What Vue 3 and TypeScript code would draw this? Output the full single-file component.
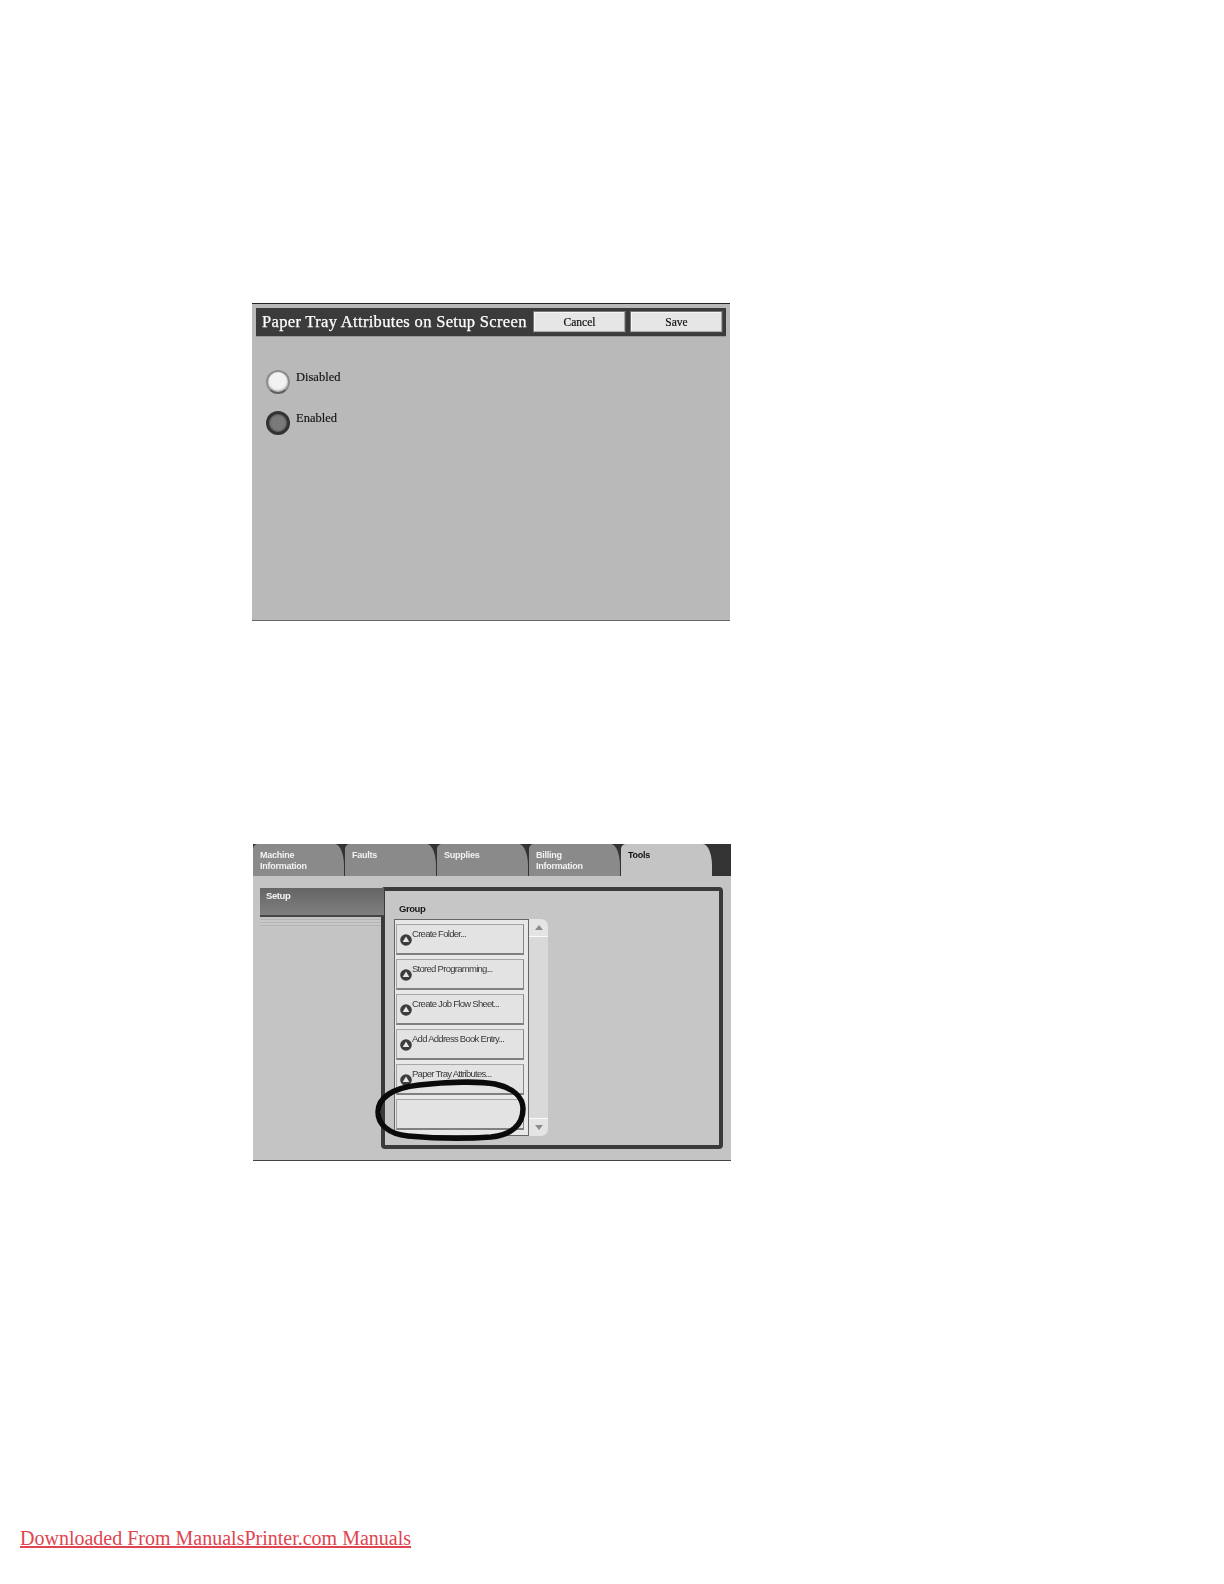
<script setup lang="ts">
const tabs = [
  { lines: ['Machine', 'Information'] },
  { lines: ['Faults'] },
  { lines: ['Supplies'] },
  { lines: ['Billing', 'Information'] },
  { lines: ['Tools'], active: true },
]
const items = ['Create Folder...', 'Stored Programming...', 'Create Job Flow Sheet...', 'Add Address Book Entry...', 'Paper Tray Attributes...', '']
</script>

<template>
  <div class="page">
    <section class="shot first">
      <header class="titlebar">
        <h1>Paper Tray Attributes on Setup Screen</h1>
        <button class="cmd">Cancel</button>
        <button class="cmd">Save</button>
      </header>
      <div class="radios">
        <div class="radio"><span class="dot off"></span><span class="rlabel">Disabled</span></div>
        <div class="radio"><span class="dot on"></span><span class="rlabel">Enabled</span></div>
      </div>
    </section>

    <section class="shot second">
      <nav class="tabs">
        <div v-for="t in tabs" :key="t.lines[0]" class="tab" :class="{ active: t.active }">
          <span v-for="l in t.lines" :key="l">{{ l }}</span>
        </div>
      </nav>
      <div class="body">
        <aside class="side">
          <div class="setup">Setup</div>
          <div class="stripes"></div>
        </aside>
        <main class="panel">
          <div class="group">Group</div>
          <div class="listwrap">
            <div class="list">
              <div v-for="(it, i) in items" :key="i" class="item">
                <svg v-if="it" class="ico" viewBox="0 0 12 12" width="12" height="12">
                  <circle cx="6" cy="6" r="5.8" fill="#3c3c3c" />
                  <path d="M6 2.6 9.3 8H2.7Z" fill="#e8e8e8" />
                </svg>
                <span v-if="it" class="itxt">{{ it }}</span>
              </div>
            </div>
            <div class="scroll">
              <div class="sbtn top"><i class="up"></i></div>
              <div class="strack"></div>
              <div class="sbtn bottom"><i class="down"></i></div>
            </div>
            <svg class="ring" viewBox="0 0 156 66" width="156" height="66">
              <path d="M44 8C72 5 104 4 120 7C138 11 148 20 148 32C148 48 136 58 116 60C90 62 55 61 33 59C13 57 3 47 3 35C3 21 17 11 44 8Z" fill="none" stroke="#0a0a0a" stroke-width="5.5" />
            </svg>
          </div>
        </main>
      </div>
    </section>

    <a class="foot">Downloaded From ManualsPrinter.com Manuals</a>
  </div>
</template>

<style scoped>
.page { width: 1224px; height: 1584px; background: #fff; overflow: hidden; }
.shot { margin-left: 252px; width: 478px; height: 318px; box-sizing: border-box; filter: blur(0.45px); }
.first { margin-top: 303px; background: #b9b9b9; border-top: 1px solid #222; border-bottom: 1px solid #666; padding: 4px 4px 0 4px; font-family: "Liberation Serif", serif; }
.second { margin-top: 223px; margin-left: 253px; width: 478px; height: 317px; background: #c4c4c4; border-bottom: 1px solid #444; display: flex; flex-direction: column; font-family: "Liberation Sans", sans-serif; }
.titlebar { height: 29px; background: #3b3b3b; display: flex; align-items: center; padding: 0 3px 0 6px; box-sizing: border-box; border-bottom: 1px solid #999; }
.titlebar h1 { margin: 0; flex: 1; font-size: 16.5px; font-weight: 400; letter-spacing: 0.33px; color: #fff; -webkit-text-stroke: 0.25px #fff; white-space: nowrap; }
.cmd { width: 93px; height: 22px; margin-left: 4px; padding: 0; border: 1px solid #777; border-right-color: #555; border-bottom-color: #444; background: #e6e6e6; box-shadow: inset -1px -1px #aaa, inset 1px 1px #f6f6f6; font: 11.5px "Liberation Serif", serif; color: #111; -webkit-text-stroke: 0.2px #111; }
.radios { display: flex; flex-direction: column; gap: 17px; padding: 33px 0 0 10px; }
.radio { display: flex; align-items: flex-start; gap: 6px; height: 24px; }
.dot { width: 24px; height: 24px; border-radius: 50%; box-sizing: border-box; }
.dot.off { background: radial-gradient(circle at 45% 40%, #f2f2f2 55%, #d8d8d8 75%); border: 2px solid #8d8d8d; border-bottom-color: #5f5f5f; box-shadow: inset 0 -1px 2px #aaa; }
.dot.on { background: radial-gradient(circle at 50% 50%, #7a7a7a 50%, #5a5a5a 75%); border: 3px solid #333; }
.rlabel { font-size: 12.5px; color: #111; line-height: 14px; -webkit-text-stroke: 0.15px #111; }
.tabs { height: 32px; background: #333; display: flex; flex: none; gap: 1px; }
.tab { width: 91px; height: 100%; box-sizing: border-box; padding: 6px 0 0 7px; background: #8a8a8a; color: #f2f2f2; font-size: 9px; font-weight: 700; line-height: 11px; letter-spacing: -0.25px; display: flex; flex-direction: column; border-radius: 5px 9px 0 0 / 5px 22px 0 0; }
.tab.active { background: #c4c4c4; color: #111; }
.body { flex: 1; display: flex; min-height: 0; padding: 11px 8px 11px 0; }
.side { width: 128px; flex: none; padding-top: 1px; position: relative; z-index: 1; }
.setup { margin: 0 -3px 0 7px; height: 29px; box-sizing: border-box; padding: 2px 0 0 6px; background: linear-gradient(#656565, #7f7f7f); border-bottom: 2px solid #444; color: #f4f4f4; font-size: 9.5px; font-weight: 700; letter-spacing: -0.4px; }
.stripes { margin: 2px 0 0 7px; height: 7px; background: repeating-linear-gradient(#b4b4b4 0 1px, #c8c8c8 1px 3px); }
.panel { flex: 1; box-sizing: border-box; border: 4px solid #3a3a3a; border-radius: 4px; background: #c6c6c6; padding: 12px 0 0 9px; }
.group { font-size: 9.5px; font-weight: 700; color: #1a1a1a; line-height: 12px; margin-left: 5px; letter-spacing: -0.45px; }
.listwrap { position: relative; display: flex; margin-top: 4px; width: 155px; height: 217px; }
.list { width: 135px; flex: none; box-sizing: border-box; background: #e8e8e8; border: 1px solid #666; padding: 4px 4px 0 1px; display: flex; flex-direction: column; gap: 4px; }
.item { height: 31px; flex: none; box-sizing: border-box; background: #e3e3e3; border: 1px solid #a5a5a5; border-bottom: 2px solid #808080; border-right-color: #888; display: flex; align-items: flex-start; padding: 4px 0 0 3px; }
.ico { margin-top: 5px; flex: none; }
.itxt { font-size: 9.5px; line-height: 12px; font-family: "Liberation Sans", sans-serif; color: #3a3a3a; letter-spacing: -0.72px; margin-top: -1px; white-space: nowrap; }
.scroll { width: 19px; flex: none; display: flex; flex-direction: column; }
.sbtn { height: 18px; flex: none; background: #e4e4e4; display: flex; align-items: center; justify-content: center; box-sizing: border-box; }
.sbtn.top { border-radius: 0 7px 0 0; border-bottom: 1px solid #fafafa; }
.sbtn.bottom { border-radius: 0 0 7px 0; border-top: 1px solid #fafafa; }
.strack { flex: 1; background: #d9d9d9; }
.up, .down { width: 0; height: 0; border-left: 4px solid transparent; border-right: 4px solid transparent; }
.up { border-bottom: 5px solid #8c8c8c; }
.down { border-top: 5px solid #8c8c8c; }
.ring { position: absolute; left: -19px; top: 158px; }
.foot { display: block; margin: 365px 0 0 20px; width: max-content; font-family: "Liberation Serif", serif; font-size: 20px; line-height: 25px; color: #e0444e; text-decoration: underline; }
</style>

<style>
html, body { margin: 0; background: #fff; }
</style>
